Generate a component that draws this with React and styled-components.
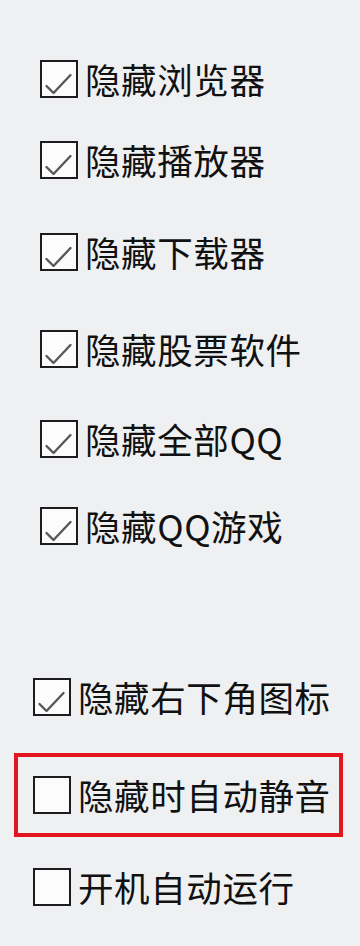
import React from 'react'
import styled, { createGlobalStyle } from 'styled-components'

const Global = createGlobalStyle`
  html, body {
    margin: 0;
    padding: 0;
    background: #eff0f2;
  }
  body {
    font-family: "Noto Sans CJK SC", "Noto Sans", sans-serif;
  }
`

const Page = styled.main`
  width: 360px;
  height: 946px;
  background: #eff0f2;
  display: flex;
  flex-direction: column;
  box-sizing: border-box;
  padding-top: 60px;
  overflow: hidden;
`

const Group = styled.section`
  display: flex;
  flex-direction: column;
  padding-left: ${p => p.$indent}px;
  margin-top: ${p => p.$mt || 0}px;
`

const Row = styled.label`
  display: flex;
  align-items: center;
  gap: 7px;
  height: 38px;
  margin-top: ${p => p.$mt || 0}px;
  color: #111;
  font-size: 35.5px;
  line-height: 38px;
  letter-spacing: 0.6px;
  white-space: nowrap;
`

const Box = styled.span`
  width: 38px;
  height: 38px;
  box-sizing: border-box;
  border: 2.5px solid #1d1d1f;
  background: #fcfcfc;
  flex: none;
  display: flex;
  align-items: center;
  justify-content: center;
`

const Highlight = styled.div`
  margin: 37px 0 0 -19px;
  width: 329px;
  height: 84px;
  box-sizing: border-box;
  border: 4px solid #e3151f;
  display: flex;
  align-items: center;
  padding-left: 15px;
`

const Check = () => (
  <svg width="33" height="33" viewBox="0 0 33 33">
    <path d="M3.5 23 L10.5 30 L27.5 12" fill="none" stroke="#58585c" strokeWidth="2.4" strokeLinecap="round" strokeLinejoin="round" />
  </svg>
)

const Option = ({ checked, text, mt }) => (
  <Row $mt={mt}>
    <Box>{checked && <Check />}</Box>
    <span>{text}</span>
  </Row>
)

const top = [
  { text: '隐藏浏览器', mt: 0 },
  { text: '隐藏播放器', mt: 43 },
  { text: '隐藏下载器', mt: 54 },
  { text: '隐藏股票软件', mt: 59 },
  { text: '隐藏全部QQ', mt: 52 },
  { text: '隐藏QQ游戏', mt: 49 },
]

export default function App() {
  return (
    <>
      <Global />
      <Page>
        <Group $indent={40}>
          {top.map((o, i) => (
            <Option key={i} checked text={o.text} mt={o.mt} />
          ))}
        </Group>
        <Group $indent={33} $mt={133}>
          <Option checked text="隐藏右下角图标" />
          <Highlight>
            <Option text="隐藏时自动静音" />
          </Highlight>
          <Option text="开机自动运行" mt={31} />
        </Group>
      </Page>
    </>
  )
}
